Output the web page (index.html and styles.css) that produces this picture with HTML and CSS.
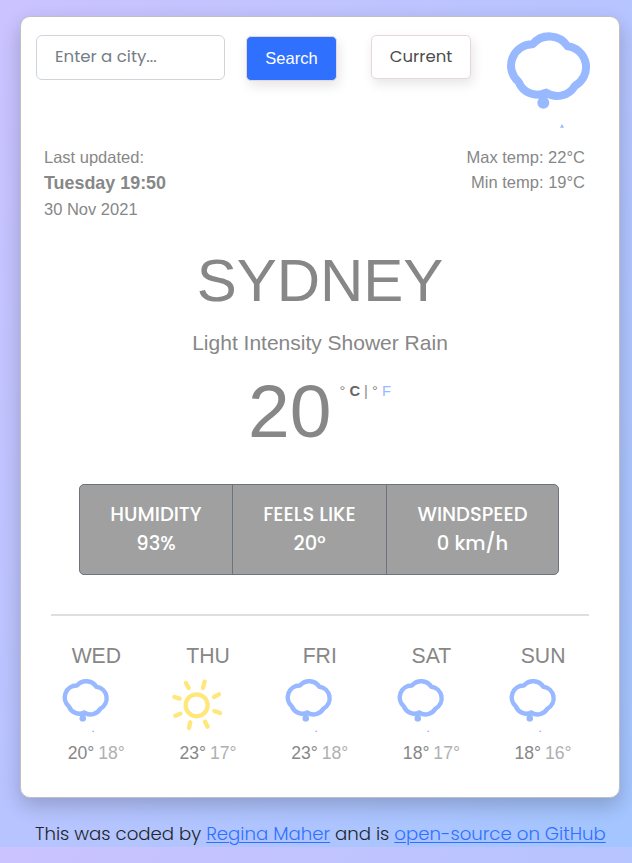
FILE: index.html
```html
<!DOCTYPE html>
<html lang="en">
<head>
<meta charset="utf-8">
<title>Weather</title>
<link rel="stylesheet" href="styles.css">
</head>
<body>
<svg class="sprite" width="0" height="0" aria-hidden="true">
  <symbol id="shower" viewBox="0 0 360 360">
    <path class="cloud" d="M128 73A65 65 0 0 1 233 79A63 63 0 0 1 255 197A62 62 0 0 1 168 218A60 60 0 0 1 86 186A64 64 0 0 1 128 73Z"/>
    <path class="drop" d="M160 218Q177 236 178 248A18 18 0 0 1 142 248Q143 236 160 218ZM170 205L184 218H155ZM216 312L222 323H210Z"/>
  </symbol>
  <symbol id="sun" viewBox="0 0 360 360">
    <g class="rays" transform="translate(170 179) scale(1.79) translate(-440 -226)">
      <circle cx="440" cy="226" r="33"/>
      <path d="M408 159l8 15M464 155l-5 19M492 201l15-8M493 243l17 6M465 275l8 15M421 277l-4 17M391 251l-15 6M373 201l16 5"/>
    </g>
  </symbol>
</svg>
<main class="card">
  <form class="search">
    <input class="city-input" type="text" placeholder="Enter a city...">
    <button class="btn btn-search" type="button">Search</button>
    <button class="btn btn-current" type="button">Current</button>
    <svg class="main-icon"><use href="#shower"/></svg>
  </form>
  <section class="meta">
    <div>Last updated:<br><strong>Tuesday 19:50</strong><br>30 Nov 2021</div>
    <div class="range">Max temp: 22°C<br>Min temp: 19°C</div>
  </section>
  <h1>SYDNEY</h1>
  <p class="description">Light Intensity Shower Rain</p>
  <div class="now"><span class="temp">20</span><span class="units">° <b>C</b> | ° <a>F</a></span></div>
  <section class="stats">
    <div><span>HUMIDITY</span><span>93%</span></div>
    <div><span>FEELS LIKE</span><span>20°</span></div>
    <div><span>WINDSPEED</span><span>0 km/h</span></div>
  </section>
  <hr>
  <section class="forecast">
    <div class="day"><h2>WED</h2><svg><use href="#shower"/></svg><p>20° <span>18°</span></p></div>
    <div class="day"><h2>THU</h2><svg><use href="#sun"/></svg><p>23° <span>17°</span></p></div>
    <div class="day"><h2>FRI</h2><svg><use href="#shower"/></svg><p>23° <span>18°</span></p></div>
    <div class="day"><h2>SAT</h2><svg><use href="#shower"/></svg><p>18° <span>17°</span></p></div>
    <div class="day"><h2>SUN</h2><svg><use href="#shower"/></svg><p>18° <span>16°</span></p></div>
  </section>
</main>
<footer>This was coded by <a>Regina Maher</a> and is <a>open-source on GitHub</a></footer>
</body>
</html>
```
FILE: styles.css
```css
* { box-sizing: border-box; }
html { background: linear-gradient(125deg, #cbc3ff 0%, #a3c5ff 100%) 0 0 / 100% 847px repeat-y; }
body {
  margin: 0;
  padding: 16px 12px 0 20px;
  height: 863px;
  overflow: hidden;
  color: #878787;
  font-family: "Liberation Sans", Arial, sans-serif;
}
.sprite { display: block; }
.card {
  width: 600px;
  height: 782px;
  background: #fff;
  border: 1px solid #bfbfc4;
  border-radius: 10px;
  box-shadow: 0 8px 20px rgba(0, 0, 0, .2);
}
.search { display: flex; align-items: flex-start; height: 113px; padding: 18px 0 0 15px; }
.city-input, .btn-current, .stats, footer { font-family: Poppins, Inter, sans-serif; }
.city-input {
  width: 189px;
  height: 45px;
  padding: 0 18px 2px;
  font-size: 16.6px;
  border: 1px solid #ced4da;
  border-radius: 6px;
}
.city-input::placeholder { color: #757d85; opacity: 1; }
.btn { border: 1px solid #e4d8dc; border-radius: 5px; padding: 0; box-shadow: 2px 5px 12px rgba(0, 0, 0, .1); }
.btn-search {
  width: 91px;
  height: 45px;
  margin: 1px 0 0 21px;
  background: #2f70ff;
  color: #fff;
  font: 16.5px "Liberation Sans", Arial, sans-serif;
}
.btn-current { width: 100px; height: 44px; margin-left: 34px; padding-bottom: 1px; background: #fff; color: #4c4c4c; font-size: 16.5px; }
.main-icon { width: 120px; height: 120px; margin: -15px 0 0 19px; flex: none; }
.cloud { fill: none; stroke: #98b9ff; stroke-width: 24; stroke-linejoin: round; }
.drop { fill: #98b9ff; }
.rays { fill: none; stroke: #ffe77c; stroke-width: 13; stroke-linecap: round; }
.meta { display: flex; justify-content: space-between; padding: 14px 34px 0 23px; height: 104px; font-size: 16.5px; line-height: 26px; }
.meta strong { font-size: 17.9px; }
.range { text-align: right; line-height: 25px; padding-top: 1px; }
h1 { margin: 11px 0 0; font-size: 60px; line-height: 72px; font-weight: 400; text-align: center; }
.description { margin: 13px 0 0; font-size: 21px; line-height: 26px; text-align: center; }
.now { display: flex; padding: 16px 0 0 227px; height: 128px; }
.temp { font-size: 75px; line-height: 78px; }
.units { margin: 10px 0 0 8px; font-size: 14.7px; line-height: 18px; }
.units b { color: #666; }
.units a { color: #98b9ff; }
.stats {
  display: grid;
  grid-template-columns: 152px 154px 172px;
  width: 480px;
  height: 91px;
  margin: 0 0 0 58px;
  border: 1px solid #6c757d;
  border-radius: 5px;
  background: #a0a0a0;
  color: #fff;
  font-size: 19.5px;
  font-weight: 500;
  line-height: 29px;
  text-align: center;
}
.stats div { display: flex; flex-direction: column; align-items: center; padding-top: 15px; }
.stats div + div { border-left: 1px solid #6c757d; }
hr { height: 2px; margin: 39px 30px 0; border: 0; background: #dfdfdf; }
.forecast { display: grid; grid-template-columns: repeat(5, 111.7px); margin: 26px 0 0 19.5px; }
.day { display: flex; flex-direction: column; text-align: center; }
.day h2 { margin: 0; font-size: 21.2px; line-height: 28px; font-weight: 400; }
.day svg { width: 67px; height: 67px; margin: 2px 0 0 12.5px; }
.day p { margin: 1px 0 0; font-size: 17.6px; line-height: 26px; }
.day span { color: #b0b0b0; margin-left: -1px; }
footer { margin: 23px 0 0 15px; color: #212529; font-size: 18.15px; font-weight: 300; line-height: 26px; white-space: nowrap; }
footer a { color: #2f70ff; text-decoration: underline; text-decoration-thickness: 1px; text-underline-offset: 2px; }
```
